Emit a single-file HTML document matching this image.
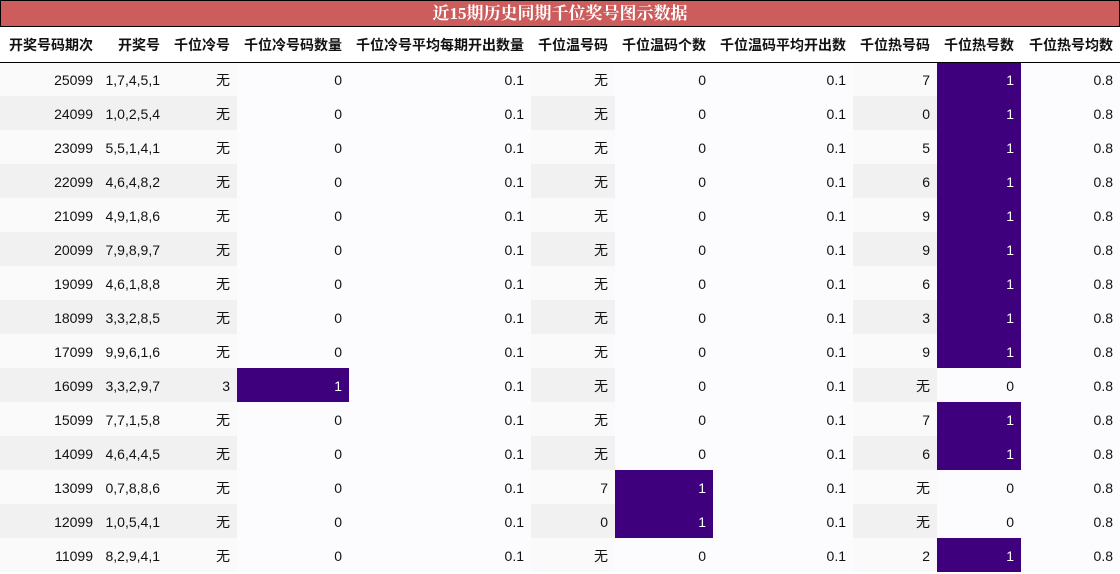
<!DOCTYPE html><html><head><meta charset="utf-8"><style>
body{margin:0;width:1120px;height:574px;overflow:hidden;background:#fff;font-family:"Liberation Sans","Noto Sans CJK SC",sans-serif;}
.t{height:25px;background:#cd5c5c;border:1px solid #000;color:#fff;font-weight:bold;font-size:17px;text-align:center;line-height:25px;font-family:"Liberation Serif","Noto Serif CJK SC",serif}
table{border-collapse:collapse;table-layout:fixed;width:1120px;font-size:14px;color:#111}
th{height:35px;font-weight:bold;text-align:right;padding:1px 7px 0 0;box-sizing:border-box;border-bottom:1px solid #000;font-size:14px;white-space:nowrap}
td{height:34px;padding:2px 7px 0 0;box-sizing:border-box;text-align:right;background:#fcfbfd}
tr:nth-child(odd) td.s{background:#fafafa}
tr:nth-child(even) td.s{background:#f1f1f1}
td.p{background:#3f007d;color:#fff}
</style></head><body>
<div class="t">近15期历史同期千位奖号图示数据</div>
<table>
<colgroup><col style="width:100px"><col style="width:67px"><col style="width:70px"><col style="width:112px"><col style="width:182px"><col style="width:84px"><col style="width:98px"><col style="width:140px"><col style="width:84px"><col style="width:84px"><col style="width:99px"></colgroup>
<thead><tr><th>开奖号码期次</th><th>开奖号</th><th>千位冷号</th><th>千位冷号码数量</th><th>千位冷号平均每期开出数量</th><th>千位温号码</th><th>千位温码个数</th><th>千位温码平均开出数</th><th>千位热号码</th><th>千位热号数</th><th>千位热号均数</th></tr></thead>
<tbody id="b"></tbody></table>
<script>
var d=[["25099","1,7,4,5,1","无",0,"无",0,"7",1],["24099","1,0,2,5,4","无",0,"无",0,"0",1],["23099","5,5,1,4,1","无",0,"无",0,"5",1],["22099","4,6,4,8,2","无",0,"无",0,"6",1],["21099","4,9,1,8,6","无",0,"无",0,"9",1],["20099","7,9,8,9,7","无",0,"无",0,"9",1],["19099","4,6,1,8,8","无",0,"无",0,"6",1],["18099","3,3,2,8,5","无",0,"无",0,"3",1],["17099","9,9,6,1,6","无",0,"无",0,"9",1],["16099","3,3,2,9,7","3",1,"无",0,"无",0],["15099","7,7,1,5,8","无",0,"无",0,"7",1],["14099","4,6,4,4,5","无",0,"无",0,"6",1],["13099","0,7,8,8,6","无",0,"7",1,"无",0],["12099","1,0,5,4,1","无",0,"0",1,"无",0],["11099","8,2,9,4,1","无",0,"无",0,"2",1]];
var h="";d.forEach(function(r){function c(v){return '<td class="'+(v?'p':'')+'">'+v+'</td>'}
h+='<tr><td class="s">'+r[0]+'</td><td class="s">'+r[1]+'</td><td class="s">'+r[2]+'</td>'+c(r[3])+'<td>0.1</td><td class="s">'+r[4]+'</td>'+c(r[5])+'<td>0.1</td><td class="s">'+r[6]+'</td>'+c(r[7])+'<td>0.8</td></tr>'});
document.getElementById("b").innerHTML=h;
</script></body></html>
